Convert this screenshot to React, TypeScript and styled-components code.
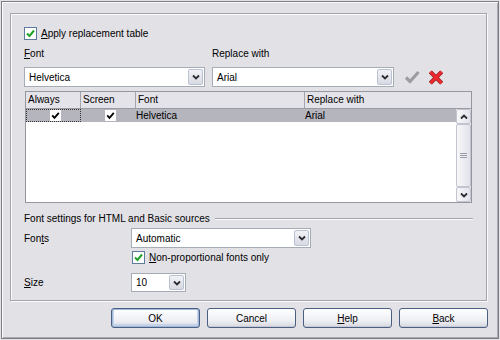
import React from 'react';
import styled, { createGlobalStyle } from 'styled-components';

const GlobalStyle = createGlobalStyle`
  html, body {
    margin: 0;
    padding: 0;
    background: #e2e1e6;
  }
  body {
    font-family: 'Liberation Sans', Arial, sans-serif;
    font-size: 10px;
    color: #000;
  }
`;

const Window = styled.div`
  box-sizing: border-box;
  width: 498px;
  height: 338px;
  margin: 1px 0 0 1px;
  border: 1px solid #7d7d86;
  box-shadow: inset 1px 1px 0 #fcfcfd, inset -1px -1px 0 #a9a9b1;
  background: #e2e1e6;
  padding: 11px 0 0 8px;
  display: flex;
  flex-direction: column;
`;

const Panel = styled.div`
  box-sizing: border-box;
  width: 477px;
  height: 288px;
  border: 1px solid #a4a4ac;
  box-shadow: inset 1px 1px 0 #fafafc, 1px 1px 0 #fafafc;
  padding: 13px 0 0 13px;
  display: flex;
  flex-direction: column;
`;

const CheckRow = styled.label<{ indent?: number; mt?: number }>`
  display: flex;
  align-items: center;
  gap: 4px;
  height: 13px;
  line-height: 13px;
  margin-left: ${({ indent }) => indent ?? 0}px;
  margin-top: ${({ mt }) => mt ?? 0}px;
  white-space: nowrap;
`;

const Box = styled.span<{ plain?: boolean }>`
  box-sizing: border-box;
  width: ${({ plain }) => (plain ? 11 : 13)}px;
  height: ${({ plain }) => (plain ? 11 : 13)}px;
  flex: none;
  background: #fff;
  border: ${({ plain }) => (plain ? 'none' : '1px solid #5e7a9c')};
  display: flex;
  align-items: center;
  justify-content: center;
`;

const U = styled.span`
  text-decoration: underline;
  text-underline-offset: 1px;
`;

const LabelRow = styled.div`
  display: flex;
  gap: 7px;
  margin-top: 7px;
  height: 13px;
  line-height: 13px;
`;

const FieldLabel = styled.div<{ w: number }>`
  width: ${({ w }) => w}px;
`;

const ComboRow = styled.div`
  display: flex;
  align-items: center;
  gap: 7px;
  margin-top: 7px;
`;

const Combo = styled.div<{ w: number; h?: number }>`
  box-sizing: border-box;
  width: ${({ w }) => w}px;
  height: ${({ h }) => h ?? 20}px;
  background: #fff;
  border: 1px solid #a5acb5;
  display: flex;
  align-items: stretch;
  padding: 1px;
`;

const ComboText = styled.div`
  flex: 1;
  padding-left: 3px;
  display: flex;
  align-items: center;
`;

const DropButton = styled.div`
  box-sizing: border-box;
  width: 15px;
  border: 1px solid #b9c3d4;
  border-radius: 2px;
  background: linear-gradient(#f2f2f6, #d8d9e2);
  display: flex;
  align-items: center;
  justify-content: center;
`;

const ToolIcon = styled.div<{ ml: number }>`
  margin-left: ${({ ml }) => ml}px;
  width: 16px;
  height: 16px;
  display: flex;
`;

const Table = styled.div`
  box-sizing: border-box;
  width: 447px;
  height: 112px;
  margin: 4px 0 0 1px;
  border: 1px solid #96969e;
  background: #fff;
  display: flex;
  flex-direction: column;
`;

const Header = styled.div`
  display: grid;
  grid-template-columns: 55px 55px 169px 1fr;
  height: 16px;
  background: #e4e3e9;
  border-bottom: 1px solid #9a9aa2;
`;

const HeadCell = styled.div`
  padding-left: 2px;
  line-height: 16px;
  border-right: 1px solid #a4a4ac;
  &:last-child {
    border-right: none;
  }
`;

const TableBody = styled.div`
  flex: 1;
  display: flex;
`;

const Rows = styled.div`
  flex: 1;
`;

const Row = styled.div`
  display: grid;
  grid-template-columns: 55px 55px 169px 1fr;
  height: 13px;
  line-height: 13px;
  background: #b5b5bd;
`;

const CheckCell = styled.div<{ focus?: boolean }>`
  box-sizing: border-box;
  display: flex;
  align-items: center;
  justify-content: center;
  padding-left: 4px;
  outline: ${({ focus }) => (focus ? '1px dotted #333' : 'none')};
  outline-offset: -1px;
`;

const TextCell = styled.div`
  padding-left: 0;
`;

const Scrollbar = styled.div`
  box-sizing: border-box;
  width: 15px;
  display: flex;
  flex-direction: column;
  background: #f4f4f6;
`;

const ScrollBtn = styled.div`
  box-sizing: border-box;
  height: 15px;
  border: 1px solid #c2c5cf;
  border-radius: 2px;
  background: linear-gradient(90deg, #f8f8fa, #e2e3ea);
  display: flex;
  align-items: center;
  justify-content: center;
`;

const Thumb = styled.div`
  flex: 1;
  box-sizing: border-box;
  border: 1px solid #c2c5cf;
  border-radius: 2px;
  background: linear-gradient(90deg, #f8f8fa, #e2e3ea);
  display: flex;
  align-items: center;
  justify-content: center;
`;

const Section = styled.div`
  display: flex;
  align-items: center;
  gap: 5px;
  margin-top: 9px;
  height: 13px;
  line-height: 13px;
  width: 449px;
`;

const Rule = styled.div`
  flex: 1;
  height: 1px;
  background: #a4a4ac;
  box-shadow: 0 1px 0 #fafafc;
`;

const FormRow = styled.div<{ mt: number }>`
  display: flex;
  align-items: center;
  margin-top: ${({ mt }) => mt}px;
`;

const FormLabel = styled.div`
  width: 107px;
`;

const ButtonBar = styled.div`
  display: flex;
  gap: 7px;
  margin: 7px 0 0 101px;
`;

const Button = styled.button<{ primary?: boolean }>`
  box-sizing: border-box;
  width: 89px;
  height: 20px;
  padding: 0;
  font: inherit;
  color: #000;
  border: 1px solid #4b5f83;
  border-radius: 3px;
  background: linear-gradient(#ffffff, #ecedf2 70%, #d6d7df);
  box-shadow: ${({ primary }) =>
    primary ? 'inset 0 0 0 1px #9fb8dc, inset 0 -1px 0 2px #c5d3ea' : 'inset 0 -1px 0 #c8c9d2'};
`;

function Chevron({ dir = 'down' }: { dir?: 'down' | 'up' }) {
  return (
    <svg width="8" height="6" viewBox="0 0 8 6">
      <path
        d={dir === 'down' ? 'M1 1.5 L4 4.5 L7 1.5' : 'M1 4.5 L4 1.5 L7 4.5'}
        fill="none"
        stroke="#2b2b33"
        strokeWidth="1.8"
      />
    </svg>
  );
}

function GreenCheck() {
  return (
    <svg width="9" height="9" viewBox="0 0 9 9">
      <path d="M1 4.5 L3.5 7 L8 1.5" fill="none" stroke="#21a12a" strokeWidth="2" />
    </svg>
  );
}

function BlackCheck() {
  return (
    <svg width="9" height="9" viewBox="0 0 9 9">
      <path d="M1.2 4.3 L3.5 6.8 L7.8 1.8" fill="none" stroke="#000" strokeWidth="1.8" />
    </svg>
  );
}

function Combobox({ value, w, h }: { value: string; w: number; h?: number }) {
  return (
    <Combo w={w} h={h}>
      <ComboText>{value}</ComboText>
      <DropButton>
        <Chevron />
      </DropButton>
    </Combo>
  );
}

export default function App() {
  return (
    <>
      <GlobalStyle />
      <Window>
        <Panel>
          <CheckRow>
            <Box>
              <GreenCheck />
            </Box>
            <span>
              <U>A</U>pply replacement table
            </span>
          </CheckRow>

          <LabelRow>
            <FieldLabel w={181}>
              <U>F</U>ont
            </FieldLabel>
            <FieldLabel w={182}>Replace with</FieldLabel>
          </LabelRow>

          <ComboRow>
            <Combobox value="Helvetica" w={181} />
            <Combobox value="Arial" w={182} />
            <ToolIcon ml={3}>
              <svg width="16" height="16" viewBox="0 0 16 16">
                <path d="M2 8.5 L6 12.5 L14.5 3" fill="none" stroke="#9c9ca2" strokeWidth="3.2" />
              </svg>
            </ToolIcon>
            <ToolIcon ml={1}>
              <svg width="17" height="17" viewBox="0 0 17 17">
                <path d="M2.5 2.5 L14.5 14.5 M14.5 2.5 L2.5 14.5" stroke="#8c1010" strokeWidth="4.4" />
                <path d="M2.5 2.5 L14.5 14.5 M14.5 2.5 L2.5 14.5" stroke="#ec2a30" strokeWidth="3" />
              </svg>
            </ToolIcon>
          </ComboRow>

          <Table>
            <Header>
              <HeadCell>Always</HeadCell>
              <HeadCell>Screen</HeadCell>
              <HeadCell>Font</HeadCell>
              <HeadCell>Replace with</HeadCell>
            </Header>
            <TableBody>
              <Rows>
                <Row>
                  <CheckCell focus>
                    <Box plain>
                      <BlackCheck />
                    </Box>
                  </CheckCell>
                  <CheckCell>
                    <Box plain>
                      <BlackCheck />
                    </Box>
                  </CheckCell>
                  <TextCell>Helvetica</TextCell>
                  <TextCell>Arial</TextCell>
                </Row>
              </Rows>
              <Scrollbar>
                <ScrollBtn>
                  <Chevron dir="up" />
                </ScrollBtn>
                <Thumb>
                  <svg width="7" height="7" viewBox="0 0 7 7">
                    <path d="M0 1.5 H7 M0 3.5 H7 M0 5.5 H7" stroke="#9a9ca6" strokeWidth="1" />
                  </svg>
                </Thumb>
                <ScrollBtn>
                  <Chevron />
                </ScrollBtn>
              </Scrollbar>
            </TableBody>
          </Table>

          <Section>
            <span>Font settings for HTML and Basic sources</span>
            <Rule />
          </Section>

          <FormRow mt={3}>
            <FormLabel>
              Fon<U>t</U>s
            </FormLabel>
            <Combobox value="Automatic" w={180} />
          </FormRow>

          <CheckRow indent={108} mt={3}>
            <Box>
              <GreenCheck />
            </Box>
            <span>
              <U>N</U>on-proportional fonts only
            </span>
          </CheckRow>

          <FormRow mt={9}>
            <FormLabel>
              <U>S</U>ize
            </FormLabel>
            <Combobox value="10" w={55} h={19} />
          </FormRow>
        </Panel>

        <ButtonBar>
          <Button primary>OK</Button>
          <Button>Cancel</Button>
          <Button>
            <U>H</U>elp
          </Button>
          <Button>
            <U>B</U>ack
          </Button>
        </ButtonBar>
      </Window>
    </>
  );
}
